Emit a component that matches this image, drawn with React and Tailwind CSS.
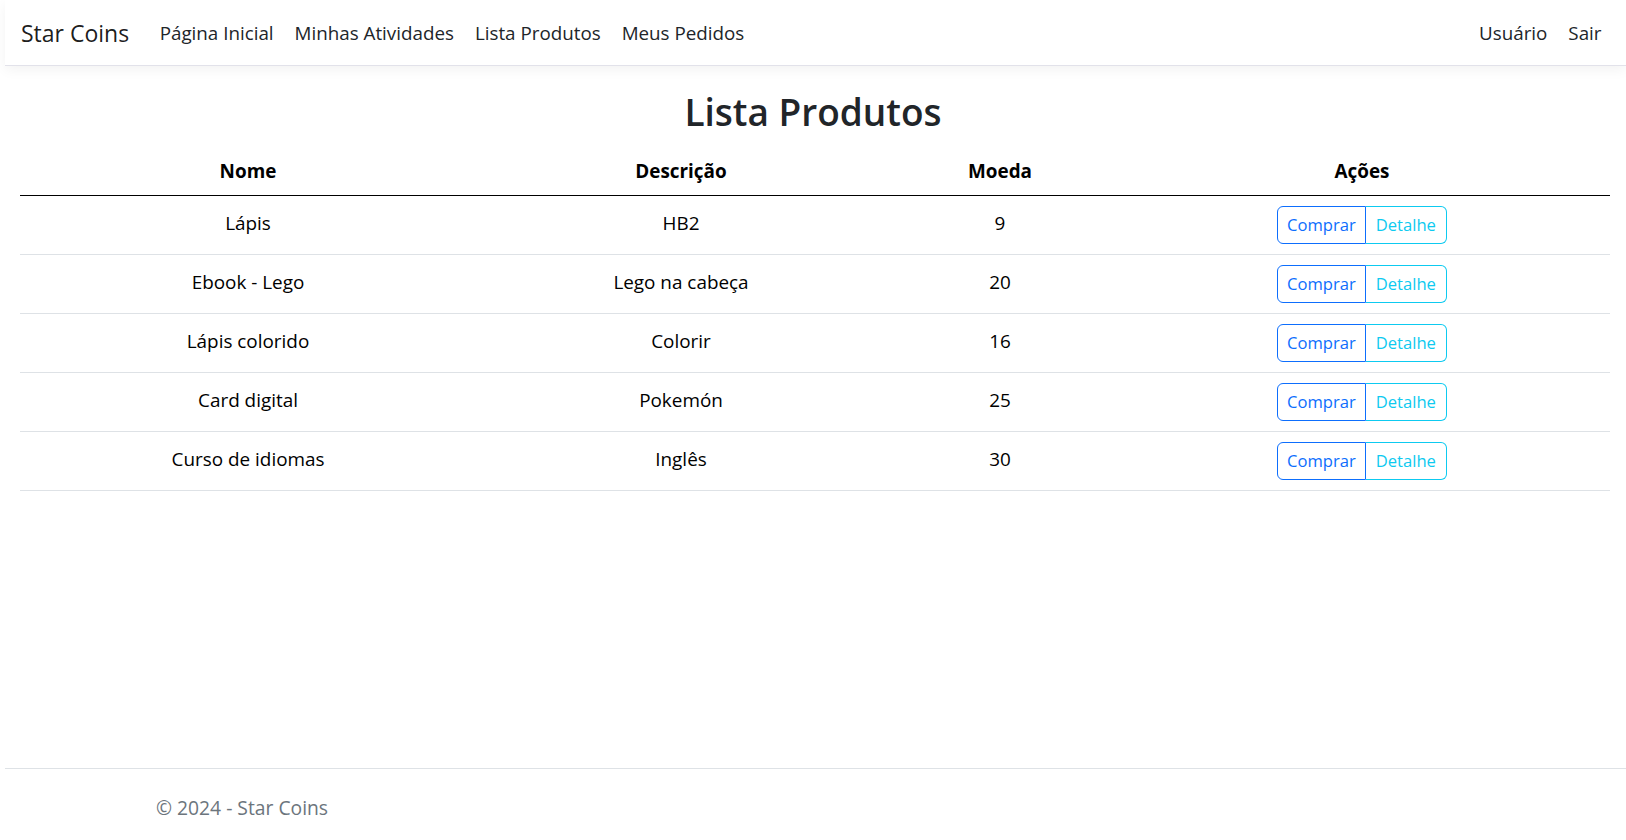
import React from "react";

const rows = [
  { nome: "Lápis", desc: "HB2", moeda: "9" },
  { nome: "Ebook - Lego", desc: "Lego na cabeça", moeda: "20" },
  { nome: "Lápis colorido", desc: "Colorir", moeda: "16" },
  { nome: "Card digital", desc: "Pokemón", moeda: "25" },
  { nome: "Curso de idiomas", desc: "Inglês", moeda: "30" },
];

export default function App() {
  return (
    <div
      className="relative h-[840px] w-[1626px] overflow-hidden bg-white text-[#212529]"
      style={{ fontFamily: '"Open Sans", "Noto Sans", sans-serif' }}
    >
      {/* Navbar */}
      <nav className="ml-[5px] flex h-[66px] items-center border-b border-[#e2e2ea] bg-white pl-4 pr-[14px] shadow-[0_4px_12px_rgba(0,0,0,0.05)]">
        <span className="mr-[20px] text-[23px] leading-[32px] text-black/90">Star Coins</span>
        <ul className="flex items-center text-[18.8px] leading-7">
          <li className="px-[10.5px]">Página Inicial</li>
          <li className="px-[10.5px]">Minhas Atividades</li>
          <li className="px-[10.5px]">Lista Produtos</li>
          <li className="px-[10.5px]">Meus Pedidos</li>
        </ul>
        <ul className="ml-auto flex items-center text-[18.8px] leading-7">
          <li className="px-[10.5px]">Usuário</li>
          <li className="px-[10.5px]">Sair</li>
        </ul>
      </nav>

      {/* Main */}
      <main className="px-5 pt-[22px]">
        <h1 className="text-center text-[37px] font-semibold leading-[48px] text-[#212529]">
          Lista Produtos
        </h1>
        <table className="mt-[19px] w-[1590px] table-fixed border-collapse text-center text-[18.9px] leading-7 text-black">
          <colgroup>
            <col className="w-[456px]" />
            <col className="w-[410px]" />
            <col className="w-[228px]" />
            <col className="w-[496px]" />
          </colgroup>
          <thead>
            <tr className="border-b border-black">
              <th className="h-[40px] pt-[2px] pb-[10px] align-top font-bold">Nome</th>
              <th className="h-[40px] pt-[2px] pb-[10px] align-top font-bold">Descrição</th>
              <th className="h-[40px] pt-[2px] pb-[10px] align-top font-bold">Moeda</th>
              <th className="h-[40px] pt-[2px] pb-[10px] align-top font-bold">Ações</th>
            </tr>
          </thead>
          <tbody>
            {rows.map((r) => (
              <tr key={r.nome} className="border-b border-[#dee2e6]">
                <td className="h-[58px] pt-[8px] pb-[12px] align-middle">{r.nome}</td>
                <td className="h-[58px] pt-[8px] pb-[12px] align-middle">{r.desc}</td>
                <td className="h-[58px] pt-[8px] pb-[12px] align-middle">{r.moeda}</td>
                <td className="h-[58px] py-[10px] align-middle">
                  <div className="inline-flex align-middle">
                    <button className="h-[38px] rounded-l-[6px] border border-[#0d6efd] px-[9px] text-[16.6px] leading-6 text-[#0d6efd]">
                      Comprar
                    </button>
                    <button className="h-[38px] rounded-r-[6px] border border-l-0 border-[#0dcaf0] px-[10px] text-[16.6px] leading-6 text-[#0dcaf0]">
                      Detalhe
                    </button>
                  </div>
                </td>
              </tr>
            ))}
          </tbody>
        </table>
      </main>

      {/* Footer */}
      <footer className="absolute bottom-0 left-[5px] right-0 h-[72px] border-t border-[#dee2e6]">
        <div className="pl-[151px] pt-[9px] text-[19.3px] leading-[60px] text-[#6c757d]">
          © 2024 - Star Coins
        </div>
      </footer>
    </div>
  );
}
